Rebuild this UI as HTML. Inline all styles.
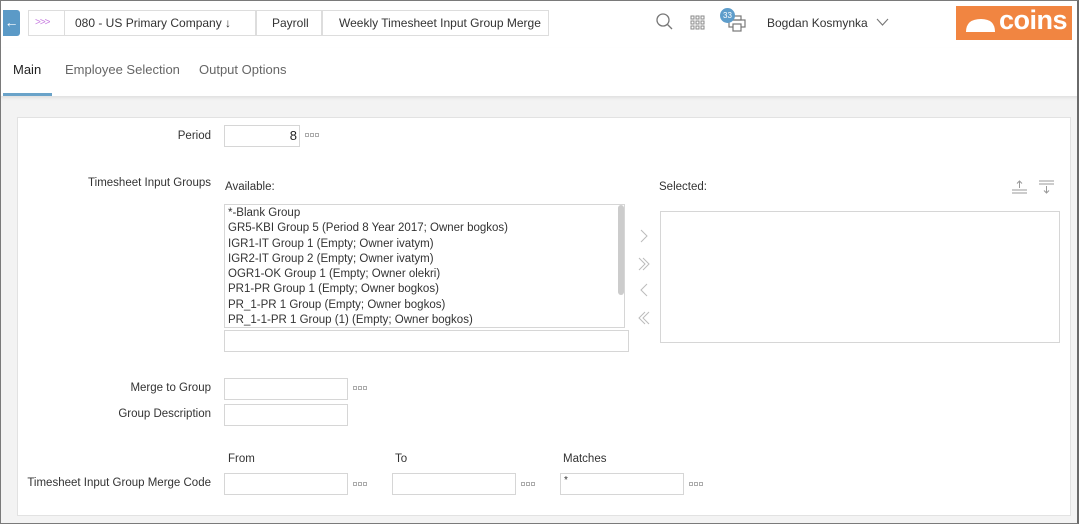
<!DOCTYPE html>
<html><head><meta charset="utf-8"><style>
*{box-sizing:border-box;margin:0;padding:0}
body{width:1079px;height:524px;overflow:hidden;font-family:"Liberation Sans",sans-serif;font-size:11.5px;color:#333;background:#f3f3f3;position:relative}
.frame{position:absolute;inset:0;border:1px solid #7a7a7a;border-right:2px solid #6a6a6a;pointer-events:none;z-index:10}
.hdr{position:absolute;left:0;top:0;width:1079px;height:48px;background:#fff}
.tabs{position:absolute;left:0;top:48px;width:1079px;height:48px;background:#fff;box-shadow:0 2px 3px rgba(0,0,0,.08)}
.a{position:absolute;white-space:nowrap}
.crumb{position:absolute;top:10px;height:26px;border:1px solid #ddd;background:#fff;line-height:24px;font-size:12px;color:#333}
.panel{position:absolute;left:17px;top:117px;width:1054px;height:399px;background:#fff;border:1px solid #e2e2e2}
.inp{position:absolute;border:1px solid #d6d6d6;background:#fff;height:22px}
.dots{position:absolute}
.lbl{position:absolute;text-align:right;width:200px;white-space:nowrap}
.list div{height:15.3px;line-height:15.3px;padding-left:3px;white-space:nowrap}
</style></head><body>
<svg width="0" height="0" style="position:absolute"><defs><g id="d" fill="none" stroke="#999" stroke-width="0.8"><rect x="0.5" y="0.5" width="3" height="3"/><rect x="5.5" y="0.5" width="3" height="3"/><rect x="10.5" y="0.5" width="3" height="3"/></g></defs></svg>
<div class="hdr">
 <div class="a" style="left:3px;top:10px;width:17px;height:26px;background:#5b9ac7;border-radius:0 3px 3px 0;color:#fff;text-align:center;line-height:24px;font-size:14px">←</div>
 <div class="crumb" style="left:28px;width:38px;color:#c77de0;padding-left:6px;font-size:10px;letter-spacing:-1px">&gt;&gt;&gt;</div>
 <div class="crumb" style="left:64px;width:192px;padding-left:10px">080 - US Primary Company ↓</div>
 <div class="crumb" style="left:256px;width:66px;padding-left:15px">Payroll</div>
 <div class="crumb" style="left:322px;width:227px;padding-left:16px">Weekly Timesheet Input Group Merge</div>
 <svg class="a" style="left:655px;top:12px" width="20" height="20"><circle cx="8" cy="8" r="6" fill="none" stroke="#777" stroke-width="1.3"/><line x1="12.5" y1="12.5" x2="17" y2="17" stroke="#777" stroke-width="1.3"/></svg>
 <svg class="a" style="left:690px;top:15px" width="16" height="16" fill="none" stroke="#888" stroke-width="1"><rect x="1" y="1" width="3" height="3"/><rect x="6" y="1" width="3" height="3"/><rect x="11" y="1" width="3" height="3"/><rect x="1" y="6" width="3" height="3"/><rect x="6" y="6" width="3" height="3"/><rect x="11" y="6" width="3" height="3"/><rect x="1" y="11" width="3" height="3"/><rect x="6" y="11" width="3" height="3"/><rect x="11" y="11" width="3" height="3"/></svg>
 <svg class="a" style="left:726px;top:14px" width="22" height="18" fill="none" stroke="#777" stroke-width="1.2"><rect x="3" y="6" width="16" height="7"/><rect x="7" y="10" width="8" height="7" fill="#fff"/><rect x="7" y="2" width="8" height="4"/></svg>
 <div class="a" style="left:720px;top:8px;width:15px;height:15px;border-radius:50%;background:#5e9dcb;color:#fff;font-size:8px;text-align:center;line-height:15px">33</div>
 <div class="a" style="left:767px;top:16px;font-size:12px">Bogdan Kosmynka</div>
 <svg class="a" style="left:876px;top:18px" width="13" height="9"><polyline points="1,1 6.5,7 12,1" fill="none" stroke="#777" stroke-width="1.1"/></svg>
 <div class="a" style="left:956px;top:6px;width:116px;height:34px;background:#f18541"></div>
 <svg class="a" style="left:964px;top:14px" width="34" height="20"><path d="M2 18 Q2 5 17 5 Q31 5 31 18 Z" fill="#fff"/></svg>
 <div class="a" style="left:999px;top:5px;font-size:27px;line-height:30px;color:#fff;font-weight:bold;letter-spacing:-0.5px">coins</div>
</div>
<div class="tabs">
 <div class="a" style="left:13px;top:14px;font-size:13px;color:#222">Main</div>
 <div class="a" style="left:65px;top:14px;font-size:13px;color:#666">Employee Selection</div>
 <div class="a" style="left:199px;top:14px;font-size:13px;color:#666">Output Options</div>
 <div class="a" style="left:3px;top:45px;width:49px;height:3px;background:#6aa3c9"></div>
</div>
<div class="panel"></div>
<div class="lbl" style="left:11px;top:130px">Period</div>
<div class="inp" style="left:224px;top:125px;width:76px;text-align:right;padding-right:2px;line-height:20px;font-size:13px;color:#222">8</div>
<svg class="dots" style="left:305px;top:133px" width="14" height="4"><use href="#d"/></svg>
<div class="lbl" style="left:11px;top:177px">Timesheet Input Groups</div>
<div class="a" style="left:225px;top:181px">Available:</div>
<div class="a" style="left:659px;top:181px">Selected:</div>
<svg class="a" style="left:1011px;top:179px" width="48" height="16" stroke="#999" fill="none"><line x1="1" y1="11" x2="16" y2="11"/><line x1="1" y1="14" x2="16" y2="14"/><line x1="8.5" y1="2" x2="8.5" y2="9"/><polyline points="6,4.5 8.5,2 11,4.5"/><line x1="28" y1="2" x2="43" y2="2"/><line x1="28" y1="5" x2="43" y2="5"/><line x1="35.5" y1="7" x2="35.5" y2="14"/><polyline points="33,11.5 35.5,14 38,11.5"/></svg>
<div class="inp list" style="left:224px;top:204px;width:401px;height:124px;padding-top:1px;color:#333">
<div>*-Blank Group</div><div>GR5-KBI Group 5 (Period 8 Year 2017; Owner bogkos)</div><div>IGR1-IT Group 1 (Empty; Owner ivatym)</div><div>IGR2-IT Group 2 (Empty; Owner ivatym)</div><div>OGR1-OK Group 1 (Empty; Owner olekri)</div><div>PR1-PR Group 1 (Empty; Owner bogkos)</div><div>PR_1-PR 1 Group (Empty; Owner bogkos)</div><div>PR_1-1-PR 1 Group (1) (Empty; Owner bogkos)</div>
</div>
<div class="a" style="left:618px;top:205px;width:6px;height:90px;background:#ccc;border-radius:3px"></div>
<div class="inp" style="left:224px;top:330px;width:405px;height:22px"></div>
<svg class="a" style="left:636px;top:228px" width="20" height="100" fill="none" stroke="#bbb" stroke-width="1"><polyline points="5,2 11,8 5,14"/><polyline points="3,30 9,36 3,42"/><polyline points="7,30 13,36 7,42"/><polyline points="11,56 5,62 11,68"/><polyline points="9,84 3,90 9,96"/><polyline points="13,84 7,90 13,96"/></svg>
<div class="inp" style="left:660px;top:211px;width:400px;height:132px"></div>
<div class="lbl" style="left:11px;top:382px">Merge to Group</div>
<div class="inp" style="left:224px;top:378px;width:124px"></div>
<svg class="dots" style="left:353px;top:386px" width="14" height="4"><use href="#d"/></svg>
<div class="lbl" style="left:11px;top:408px">Group Description</div>
<div class="inp" style="left:224px;top:404px;width:124px"></div>
<div class="a" style="left:228px;top:453px">From</div>
<div class="a" style="left:395px;top:453px">To</div>
<div class="a" style="left:563px;top:453px">Matches</div>
<div class="lbl" style="left:11px;top:477px">Timesheet Input Group Merge Code</div>
<div class="inp" style="left:224px;top:473px;width:124px"></div>
<svg class="dots" style="left:353px;top:482px" width="14" height="4"><use href="#d"/></svg>
<div class="inp" style="left:392px;top:473px;width:124px"></div>
<svg class="dots" style="left:521px;top:482px" width="14" height="4"><use href="#d"/></svg>
<div class="inp" style="left:560px;top:473px;width:124px;padding-left:3px;line-height:14px;font-size:10px">*</div>
<svg class="dots" style="left:689px;top:482px" width="14" height="4"><use href="#d"/></svg>
<div class="frame"></div>
</body></html>
